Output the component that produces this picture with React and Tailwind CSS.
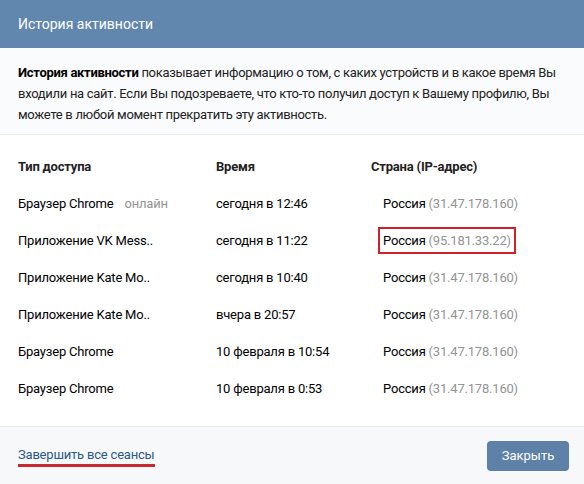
import React from "react";

const sessions = [
  { type: "Браузер Chrome", online: true, time: "сегодня в 12:46", ip: "31.47.178.160" },
  { type: "Приложение VK Mess..", time: "сегодня в 11:22", ip: "95.181.33.22", marked: true },
  { type: "Приложение Kate Mo..", time: "сегодня в 10:40", ip: "31.47.178.160" },
  { type: "Приложение Kate Mo..", time: "вчера в 20:57", ip: "31.47.178.160" },
  { type: "Браузер Chrome", time: "10 февраля в 10:54", ip: "31.47.178.160" },
  { type: "Браузер Chrome", time: "10 февраля в 0:53", ip: "31.47.178.160" },
];

export default function App() {
  return (
    <div
      className="w-[584px] h-[484px] overflow-hidden bg-white text-[13px] text-black tracking-[-0.2px]"
      style={{ fontFamily: "Roboto, 'Liberation Sans', sans-serif" }}
    >
      {/* title bar */}
      <div className="h-[48px] bg-[#6287ae] flex items-center px-[18px]">
        <span className="text-white text-[14px] tracking-normal">История активности</span>
      </div>

      {/* intro */}
      <div className="bg-[#fafbfc] border-b border-[#e7e8ec] px-[18px] pt-[14px] pb-[9px] leading-[21px] text-[#222] tracking-[-0.3px]">
        <b className="font-bold text-black">История активности</b> показывает информацию о том, с каких устройств и в какое время Вы входили на сайт. Если Вы подозреваете, что кто-то получил доступ к Вашему профилю, Вы можете в любой момент прекратить эту активность.
      </div>

      {/* sessions table */}
      <div className="px-[18px] pt-[13px] pb-[19px]">
        <div className="grid grid-cols-[198px_155px_1fr] h-[37px] items-center font-bold text-[#222]">
          <div>Тип доступа</div>
          <div>Время</div>
          <div>Страна (IP-адрес)</div>
        </div>
        {sessions.map((s, i) => (
          <div key={i} className="grid grid-cols-[198px_155px_1fr] h-[37px] items-center">
            <div>
              {s.type}
              {s.online && <span className="ml-[11px] text-[#939393]">онлайн</span>}
            </div>
            <div>{s.time}</div>
            <div>
              <span
                className={
                  "inline-block ml-[7px] px-[3px] py-[2px] border-2 " +
                  (s.marked ? "border-[#d0202c]" : "border-transparent")
                }
              >
                Россия <span className="text-[#939393]">({s.ip})</span>
              </span>
            </div>
          </div>
        ))}
      </div>

      {/* footer */}
      <div className="bg-[#f7f8fa] border-t border-[#e7e8ec] px-[15px] py-[14px] flex items-center justify-between">
        <a href="#" className="ml-[3px] text-[13px] text-[#2a5885] border-b-[3px] border-[#c8282f] leading-[18px]">
          Завершить все сеансы
        </a>
        <button className="h-[30px] w-[82px] rounded-[4px] bg-[#5e81a8] text-white text-[13px] tracking-normal">
          Закрыть
        </button>
      </div>
    </div>
  );
}
